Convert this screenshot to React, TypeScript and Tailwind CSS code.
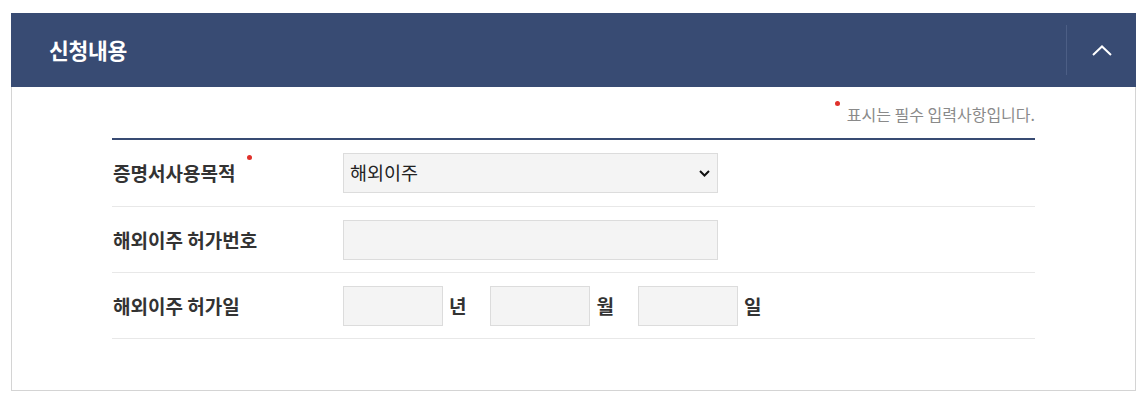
const font = '"Noto Sans CJK KR", "Noto Sans", sans-serif';

function Dot({ className = '' }: { className?: string }) {
  return <span className={`inline-block h-[5px] w-[5px] shrink-0 rounded-full bg-[#e0312b] ${className}`} />;
}

function Field({ className = '' }: { className?: string }) {
  return (
    <input
      type="text"
      className={`h-[40px] border border-[#dcdcdc] bg-[#f4f4f4] px-2 text-[17px] text-[#222] outline-none ${className}`}
    />
  );
}

export default function App() {
  return (
    <div className="min-h-screen bg-white pl-[11px] pt-[13px]" style={{ fontFamily: font }}>
      <div className="w-[1125px]">
        {/* header bar */}
        <div className="flex h-[74px] items-center bg-[#384b73]">
          <h2 className="flex-1 pl-[38px] text-[21.5px] font-bold tracking-[-0.3px] text-white">신청내용</h2>
          <div className="h-[50px] w-px bg-[#4c5e85]" />
          <button type="button" className="flex h-full w-[69px] items-center justify-center">
            <svg width="20" height="11" viewBox="0 0 20 11" fill="none">
              <path d="M1 10 L10 1.5 L19 10" stroke="#fff" strokeWidth="2" />
            </svg>
          </button>
        </div>

        {/* body */}
        <div className="border border-t-0 border-[#d4d4d4] px-[100px] pb-[51px]">
          <p className="flex justify-end pt-[17px] text-[16px] leading-[20px] text-[#8a8a8a]">
            <Dot className="mr-[7px] mt-[-3px]" />
            표시는 필수 입력사항입니다.
          </p>

          <div className="mt-[14px] border-t-2 border-[#384b73]">
            {/* row 1 */}
            <div className="flex h-[67px] items-center border-b border-[#e8e8e8]">
              <div className="flex w-[231px] pl-px text-[19px] font-bold text-[#333]">
                <span className="leading-[26px]">증명서사용목적</span>
                <Dot className="ml-[12px] mt-[-5px]" />
              </div>
              <div className="relative w-[375px]">
                <select className="h-[40px] w-full appearance-none border border-[#dcdcdc] bg-[#f4f4f4] pl-[6px] text-[18.5px] text-[#222] outline-none">
                  <option>해외이주</option>
                </select>
                <svg
                  className="pointer-events-none absolute right-[8px] top-[17px]"
                  width="11"
                  height="7"
                  viewBox="0 0 11 7"
                  fill="none"
                >
                  <path d="M1 1 L5.5 5.5 L10 1" stroke="#111" strokeWidth="2" />
                </svg>
              </div>
            </div>

            {/* row 2 */}
            <div className="flex h-[66px] items-center border-b border-[#e8e8e8]">
              <div className="w-[231px] pl-px text-[19px] font-bold leading-[26px] text-[#333]">해외이주 허가번호</div>
              <Field className="w-[375px]" />
            </div>

            {/* row 3 */}
            <div className="flex h-[66px] items-center border-b border-[#e8e8e8]">
              <div className="w-[231px] pl-px text-[19px] font-bold leading-[26px] text-[#333]">해외이주 허가일</div>
              <div className="flex items-center text-[19px] font-bold leading-[26px] text-[#333]">
                <Field className="w-[100px]" />
                <span className="ml-[6px] mr-[24px]">년</span>
                <Field className="w-[100px]" />
                <span className="ml-[6px] mr-[24px]">월</span>
                <Field className="w-[100px]" />
                <span className="ml-[6px]">일</span>
              </div>
            </div>
          </div>
        </div>
      </div>
    </div>
  );
}
